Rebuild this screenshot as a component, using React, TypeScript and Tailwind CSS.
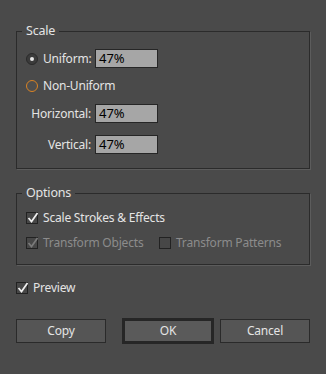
import React from 'react';

const font = { fontFamily: '"Noto Sans", "Segoe UI", sans-serif' };

function Radio({ checked, focused }: { checked?: boolean; focused?: boolean }) {
  return (
    <span
      className={`w-[12px] h-[12px] rounded-full flex items-center justify-center shrink-0 ${
        focused ? 'border-[1.5px] border-[#d98324] bg-[#4e4e4e]' : 'border border-[#2a2a2a] bg-[#3b3b3b]'
      }`}
    >
      {checked && <span className="w-[4px] h-[4px] rounded-full bg-[#e6e6e6]" />}
    </span>
  );
}

function Check({ checked, disabled }: { checked?: boolean; disabled?: boolean }) {
  return (
    <span className="block w-[12px] h-[12px] border border-[#222222] bg-[#474747] relative shrink-0">
      {checked && (
        <svg viewBox="0 0 12 12" className="absolute left-0 -top-[2px] w-[12px] h-[13px]">
          <path
            d="M1.5 6.5 L4.5 10 L10.5 1.5"
            fill="none"
            stroke={disabled ? '#7a7a7a' : '#f0f0f0'}
            strokeWidth="1.7"
          />
        </svg>
      )}
    </span>
  );
}

function Field({ value }: { value: string }) {
  return (
    <div className="w-[63px] h-[19px] bg-[#a6a6a6] border border-[#262626] text-[13px] leading-[17px] text-black pl-[3px] tracking-normal">
      {value}
    </div>
  );
}

function Group({ title, children, className }: { title: string; children: React.ReactNode; className?: string }) {
  return (
    <div className={`relative border border-[#2b2b2b] shadow-[1px_1px_0_#5c5c5c] pl-[9px] ${className ?? ''}`}>
      <span className="absolute left-[5px] -top-[9px] px-[4px] bg-[#4a4a4a] text-[12.5px] leading-[16px] text-[#e4e4e4]">
        {title}
      </span>
      {children}
    </div>
  );
}

export default function App() {
  return (
    <div
      className="w-[326px] h-[374px] bg-[#4a4a4a] px-4 pt-[31px] text-[12px] tracking-[-0.2px] text-[#e4e4e4]"
      style={font}
    >
      <Group title="Scale" className="pt-[17px] pb-[14px]">
        <div className="flex items-center h-[19px]">
          <div className="w-[69px] flex items-center gap-[5px]">
            <Radio checked />
            <span>Uniform:</span>
          </div>
          <Field value="47%" />
        </div>
        <div className="flex items-center h-[19px] mt-[8px]">
          <div className="flex items-center gap-[5px]">
            <Radio focused />
            <span>Non-Uniform</span>
          </div>
        </div>
        <div className="flex items-center h-[19px] mt-[9px]">
          <div className="w-[69px] text-right pr-[4px]">Horizontal:</div>
          <Field value="47%" />
        </div>
        <div className="flex items-center h-[19px] mt-[12px]">
          <div className="w-[69px] text-right pr-[4px]">Vertical:</div>
          <Field value="47%" />
        </div>
      </Group>

      <Group title="Options" className="mt-[24px] pt-[18px] pb-[15px]">
        <div className="flex items-center gap-[5px] h-[12px]">
          <Check checked />
          <span>Scale Strokes &amp; Effects</span>
        </div>
        <div className="flex items-center h-[12px] mt-[13px] text-[#8c8c8c]">
          <div className="w-[133px] flex items-center gap-[5px]">
            <Check checked disabled />
            <span>Transform Objects</span>
          </div>
          <div className="flex items-center gap-[5px]">
            <Check />
            <span>Transform Patterns</span>
          </div>
        </div>
      </Group>

      <div className="flex items-center gap-[5px] h-[12px] mt-[17px]">
        <Check checked />
        <span>Preview</span>
      </div>

      <div className="flex items-center mt-[24px]">
        <button className="w-[90px] h-[24px] border border-[#2a2a2a] bg-[#555555] text-[#e4e4e4]">Copy</button>
        <button className="w-[92px] h-[26px] ml-[16px] border-[3px] border-[#262626] bg-[#5a5a5a] text-[#e4e4e4]">
          OK
        </button>
        <button className="w-[90px] h-[24px] ml-[6px] border border-[#2a2a2a] bg-[#555555] text-[#e4e4e4]">Cancel</button>
      </div>
    </div>
  );
}
